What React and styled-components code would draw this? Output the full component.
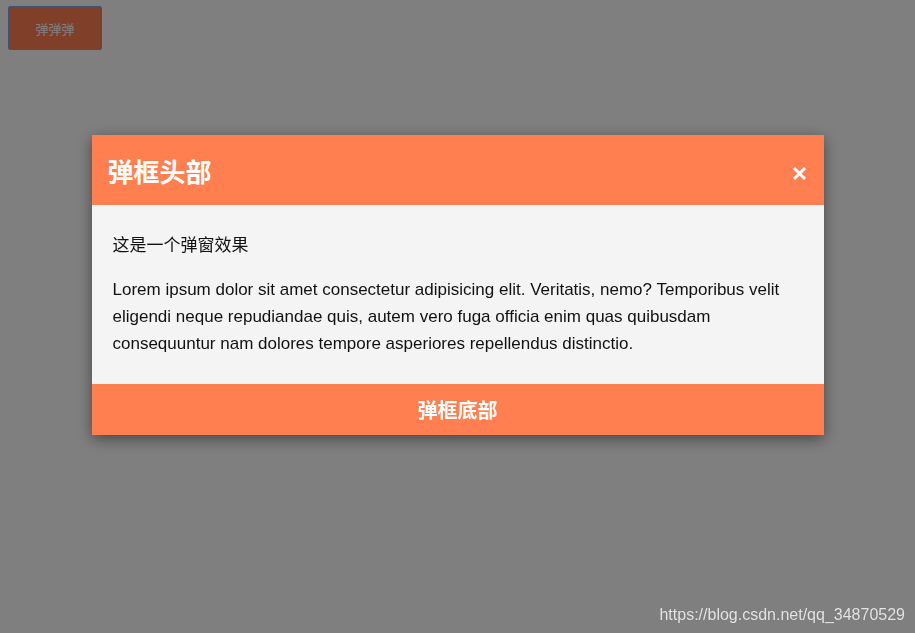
import styled, { createGlobalStyle } from 'styled-components';

const GlobalStyle = createGlobalStyle`
  html, body {
    margin: 0;
    padding: 0;
    background: #ffffff;
  }
  body {
    font-family: "Liberation Sans", "Noto Sans CJK SC", sans-serif;
  }
`;

const Page = styled.div`
  min-height: 633px;
  padding: 6px 8px;
  box-sizing: border-box;
`;

const OpenButton = styled.button`
  width: 94px;
  height: 44px;
  background: #ff7f50;
  border: 1px solid #7ea6ee;
  border-radius: 2px;
  color: #ffffff;
  font-family: "Liberation Sans", "Noto Sans CJK SC", sans-serif;
  font-size: 13px;
  cursor: pointer;
`;

const Overlay = styled.div`
  position: fixed;
  inset: 0;
  background: rgba(0, 0, 0, 0.5);
  display: flex;
  justify-content: center;
  align-items: flex-start;
  padding-top: 135px;
`;

const Modal = styled.div`
  width: 732px;
  background: #f4f4f4;
  box-shadow: 0 4px 14px rgba(0, 0, 0, 0.45);
  display: flex;
  flex-direction: column;
`;

const Header = styled.div`
  height: 70px;
  background: #ff7f50;
  display: flex;
  align-items: center;
  justify-content: space-between;
  padding: 0 18px 0 16px;
`;

const Title = styled.h2`
  margin: 0;
  color: #ffffff;
  font-size: 26px;
  font-weight: bold;
`;

const CloseButton = styled.button`
  background: none;
  border: none;
  padding: 0;
  width: 13px;
  height: 13px;
  display: flex;
  margin-top: 6px;
  cursor: pointer;
`;

const Body = styled.div`
  padding: 10px 20px 10px 21px;
  color: #111111;
  font-size: 17px;
  line-height: 27px;
`;

const Paragraph = styled.p`
  margin: 17px 0;
`;

const Footer = styled.div`
  height: 51px;
  background: #ff7f50;
  color: #ffffff;
  font-size: 20px;
  font-weight: bold;
  display: flex;
  align-items: center;
  justify-content: center;
`;

const Watermark = styled.div`
  position: fixed;
  right: 10px;
  bottom: 9px;
  color: #e4e4e4;
  font-size: 16px;
  text-shadow: 0 0 1px rgba(0, 0, 0, 0.2);
`;

export default function App() {
  return (
    <>
      <GlobalStyle />
      <Page>
        <OpenButton>弹弹弹</OpenButton>
      </Page>
      <Overlay>
        <Modal>
          <Header>
            <Title>弹框头部</Title>
            <CloseButton aria-label="close">
              <svg width="13" height="13" viewBox="0 0 13 13">
                <path d="M2 2 L11 11 M11 2 L2 11" stroke="#ffffff" strokeWidth="3" strokeLinecap="square" />
              </svg>
            </CloseButton>
          </Header>
          <Body>
            <Paragraph>这是一个弹窗效果</Paragraph>
            <Paragraph>
              Lorem ipsum dolor sit amet consectetur adipisicing elit. Veritatis, nemo? Temporibus velit
              eligendi neque repudiandae quis, autem vero fuga officia enim quas quibusdam consequuntur
              nam dolores tempore asperiores repellendus distinctio.
            </Paragraph>
          </Body>
          <Footer>弹框底部</Footer>
        </Modal>
      </Overlay>
      <Watermark>https://blog.csdn.net/qq_34870529</Watermark>
    </>
  );
}
